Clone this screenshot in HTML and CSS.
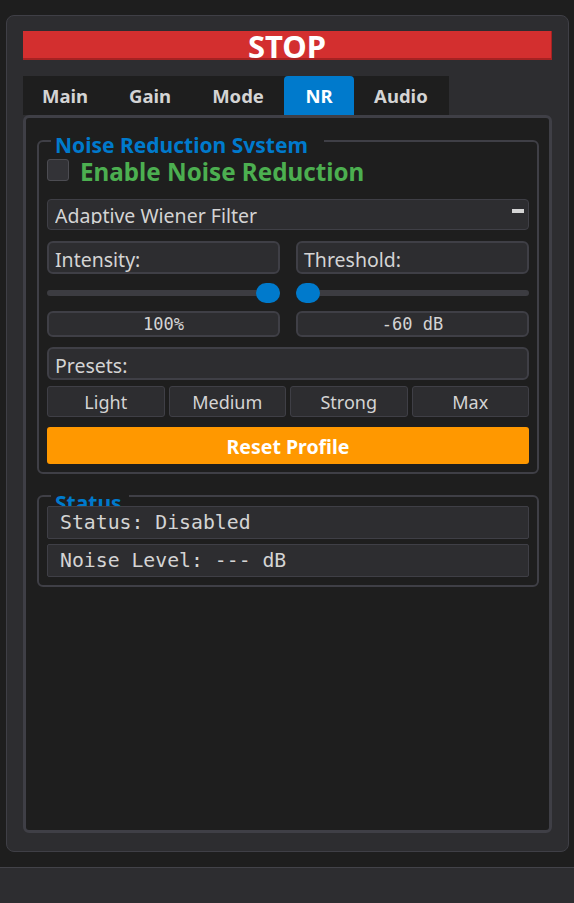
FILE: index.html
```html
<!DOCTYPE html>
<html>
<head>
<meta charset="utf-8">
<link rel="stylesheet" href="styles.css">
</head>
<body>
<div class="window">
  <div class="stop">STOP</div>
  <div class="tabs">
    <div class="tab">Main</div>
    <div class="tab">Gain</div>
    <div class="tab">Mode</div>
    <div class="tab active">NR</div>
    <div class="tab">Audio</div>
  </div>
  <div class="pane">
    <div class="group group-nr">
      <div class="legend legend-nr"><span>Noise Reduction System</span></div>
      <div class="check-row">
        <span class="checkbox"></span>
        <span class="check-text">Enable Noise Reduction</span>
      </div>
      <div class="combo">
        <span class="combo-text">Adaptive Wiener Filter</span>
        <span class="arrow"></span>
      </div>
      <div class="two-col fields">
        <div class="field">Intensity:</div>
        <div class="field">Threshold:</div>
      </div>
      <div class="two-col sliders">
        <div class="slider"><div class="track"></div><div class="handle" style="left: calc(100% - 24px)"></div></div>
        <div class="slider"><div class="track"></div><div class="handle" style="left: 0"></div></div>
      </div>
      <div class="two-col values">
        <div class="value">100%</div>
        <div class="value">-60 dB</div>
      </div>
      <div class="field presets">Presets:</div>
      <div class="preset-row">
        <div class="preset">Light</div>
        <div class="preset">Medium</div>
        <div class="preset">Strong</div>
        <div class="preset">Max</div>
      </div>
      <div class="reset">Reset Profile</div>
    </div>
    <div class="group group-status">
      <div class="legend legend-status"><span>Status</span></div>
      <div class="status-row">Status: Disabled</div>
      <div class="status-row gap">Noise Level: --- dB</div>
    </div>
  </div>
</div>
<div class="bottom-bar"></div>
</body>
</html>
```
FILE: styles.css
```css
html, body {
  margin: 0;
  padding: 0;
}
body {
  background: #1e1e1e;
  height: 903px;
  overflow: hidden;
  display: flex;
  flex-direction: column;
  font-family: "Noto Sans", "Open Sans", sans-serif;
  color: #d4d4d4;
}
.window {
  flex: 1;
  margin: 15px 5px 15px 6px;
  background: #2d2d30;
  border: 1px solid #3f3f46;
  border-radius: 8px;
  padding: 15px 16px 18px 16px;
  display: flex;
  flex-direction: column;
  min-height: 0;
}
.stop {
  height: 29px;
  box-sizing: border-box;
  background: #d32f2f;
  border-bottom: 2px solid #a52222;
  border-right: 1px solid #a52222;
  color: #ffffff;
  font-weight: 700;
  font-size: 31px;
  line-height: 31px;
  text-align: center;
  overflow: hidden;
}
.tabs {
  margin-top: 16px;
  display: flex;
  width: 426px;
  background: #1e1e1e;
  height: 39px;
}
.tab {
  padding: 0 20.5px;
  font-weight: 700;
  font-size: 18.5px;
  line-height: 39px;
  color: #d4d4d4;
}
.tab:first-child {
  padding-left: 19px;
}
.tab.active {
  background: #007acc;
  color: #ffffff;
  border-radius: 4px 4px 0 0;
  padding: 0 21px;
}
.pane {
  flex: 1;
  background: #1e1e1e;
  border: 3px solid #3f3f46;
  border-radius: 6px;
  padding: 22px 10px 0 11px;
}
.group {
  position: relative;
  border: 2px solid #3f3f46;
  border-radius: 6px;
  display: flex;
  flex-direction: column;
}
.group-nr {
  padding: 15px 8px 8px 8px;
}
.group-status {
  margin-top: 21px;
  padding: 9px 8px 8px 8px;
}
.legend {
  position: absolute;
  left: 12px;
  background: #1e1e1e;
  padding: 0 5px 0 4px;
  overflow: hidden;
  color: #007acc;
  font-weight: 700;
  font-size: 21px;
  line-height: 21px;
}
.legend-nr {
  top: -7px;
  height: 18px;
  width: 264px;
}
.legend-status {
  top: -6px;
  padding-top: 2px;
  box-sizing: border-box;
  height: 16px;
  width: 78px;
}
.check-row {
  display: flex;
  align-items: flex-start;
  height: 28px;
}
.checkbox {
  width: 22px;
  height: 22px;
  box-sizing: border-box;
  margin-top: 2px;
  background: #333337;
  border: 1px solid #4c4c52;
  border-radius: 3px;
}
.check-text {
  margin-left: 11px;
  padding-top: 2px;
  color: #4caf50;
  font-weight: 700;
  font-size: 24.2px;
  line-height: 26px;
}
.combo {
  margin-top: 14px;
  height: 31px;
  box-sizing: border-box;
  background: #2d2d30;
  border: 1px solid #3f3f46;
  border-radius: 4px;
  padding: 0 4px 0 7px;
  display: flex;
  align-items: flex-start;
}
.combo-text {
  flex: 1;
  margin-top: 4px;
  height: 20px;
  overflow: hidden;
  font-size: 19.5px;
  line-height: 24px;
}
.arrow {
  width: 12px;
  height: 4px;
  margin-top: 9px;
  background: #d4d4d4;
}
.two-col {
  display: grid;
  grid-template-columns: 1fr 1fr;
  column-gap: 16px;
}
.fields {
  margin-top: 11px;
}
.field {
  height: 33px;
  box-sizing: border-box;
  background: #2d2d30;
  border: 2px solid #3f3f46;
  border-radius: 6px;
  padding: 3px 6px 0 6px;
  font-size: 19.5px;
  line-height: 28px;
}
.sliders {
  margin-top: 9px;
}
.slider {
  position: relative;
  height: 20px;
}
.track {
  position: absolute;
  left: 0;
  right: 0;
  top: 7px;
  height: 6px;
  border-radius: 3px;
  background: #3c3c41;
}
.handle {
  position: absolute;
  top: 0;
  width: 24px;
  height: 20px;
  border-radius: 10px;
  background: #007acc;
}
.values {
  margin-top: 8px;
}
.value {
  height: 26px;
  box-sizing: border-box;
  background: #2d2d30;
  border: 2px solid #3f3f46;
  border-radius: 6px;
  text-align: center;
  font-family: "DejaVu Sans Mono", monospace;
  font-size: 17px;
  line-height: 22px;
}
.presets {
  margin-top: 10px;
}
.preset-row {
  margin-top: 6px;
  display: grid;
  grid-template-columns: repeat(4, 1fr);
  column-gap: 4px;
}
.preset {
  height: 31px;
  box-sizing: border-box;
  background: #2d2d30;
  border: 1px solid #3f3f46;
  border-radius: 3px;
  text-align: center;
  font-size: 18px;
  line-height: 30px;
}
.reset {
  margin-top: 10px;
  height: 37px;
  box-sizing: border-box;
  padding-top: 3px;
  background: #ff9800;
  border-radius: 3px;
  color: #ffffff;
  text-align: center;
  font-weight: 700;
  font-size: 19.5px;
  line-height: 34px;
}
.status-row {
  position: relative;
  height: 33px;
  box-sizing: border-box;
  background: #2d2d30;
  border: 1px solid #3f3f46;
  border-radius: 2px;
  padding: 0 12px;
  font-family: "DejaVu Sans Mono", monospace;
  font-size: 19.8px;
  line-height: 32px;
}
.status-row.gap {
  margin-top: 5px;
}
.bottom-bar {
  height: 36px;
  flex: none;
  box-sizing: border-box;
  background: #2d2d30;
  border-top: 1px solid #434349;
}
```
